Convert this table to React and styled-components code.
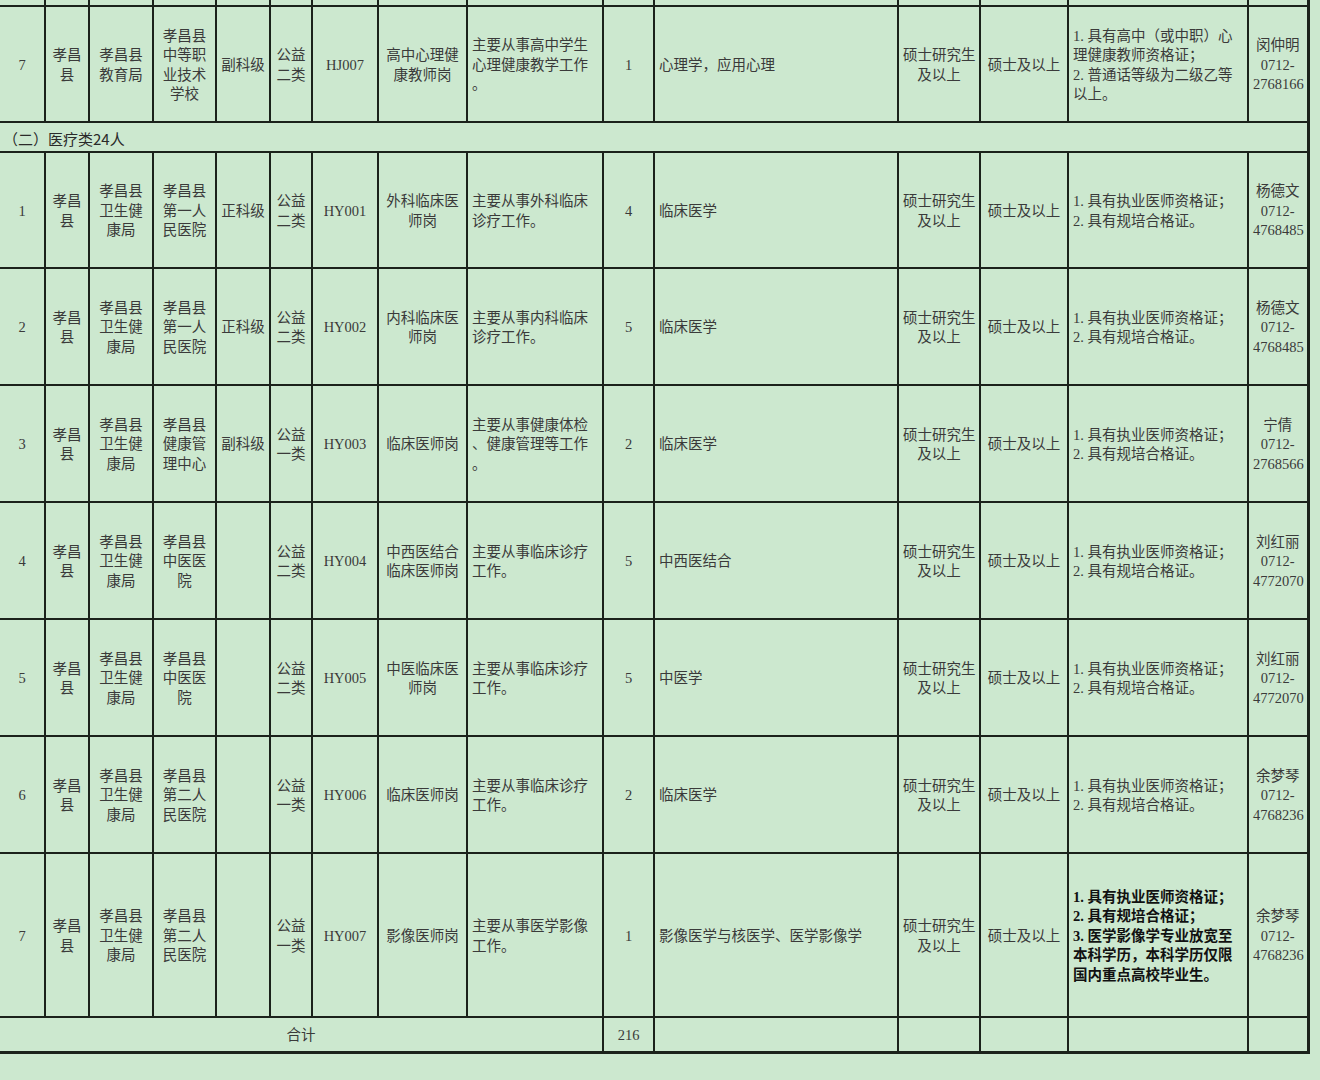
import React from 'react';
import styled, { createGlobalStyle } from 'styled-components';

const GlobalStyle = createGlobalStyle`
  html, body {
    margin: 0;
    padding: 0;
    background: #cce8cf;
  }
`;

// column widths measured between grid lines
const widths = [45, 44, 64, 63, 54, 42, 66, 89, 136, 51, 244, 82, 88, 180, 60];
const leftCols = [8, 10, 13];

const county = ['孝昌', '县'];
const health = ['孝昌县', '卫生健', '康局'];
const edu = ['硕士研究生', '及以上'];
const degree = '硕士及以上';
const req = ['1. 具有执业医师资格证；', '2. 具有规培合格证。'];

const rows = [
  {
    h: 116,
    cells: ['7', county, ['孝昌县', '教育局'], ['孝昌县', '中等职', '业技术', '学校'], '副科级', ['公益', '二类'], 'HJ007',
      ['高中心理健', '康教师岗'], ['主要从事高中学生', '心理健康教学工作', '。'], '1', '心理学，应用心理', edu, degree,
      ['1. 具有高中（或中职）心', '理健康教师资格证；', '2. 普通话等级为二级乙等', '以上。'], ['闵仲明', '0712-', '2768166']],
  },
  { section: '（二）医疗类24人' },
  {
    h: 116,
    cells: ['1', county, health, ['孝昌县', '第一人', '民医院'], '正科级', ['公益', '二类'], 'HY001',
      ['外科临床医', '师岗'], ['主要从事外科临床', '诊疗工作。'], '4', '临床医学', edu, degree, req, ['杨德文', '0712-', '4768485']],
  },
  {
    h: 117,
    cells: ['2', county, health, ['孝昌县', '第一人', '民医院'], '正科级', ['公益', '二类'], 'HY002',
      ['内科临床医', '师岗'], ['主要从事内科临床', '诊疗工作。'], '5', '临床医学', edu, degree, req, ['杨德文', '0712-', '4768485']],
  },
  {
    h: 117,
    cells: ['3', county, health, ['孝昌县', '健康管', '理中心'], '副科级', ['公益', '一类'], 'HY003',
      '临床医师岗', ['主要从事健康体检', '、健康管理等工作', '。'], '2', '临床医学', edu, degree, req, ['宁倩', '0712-', '2768566']],
  },
  {
    h: 117,
    cells: ['4', county, health, ['孝昌县', '中医医', '院'], '', ['公益', '二类'], 'HY004',
      ['中西医结合', '临床医师岗'], ['主要从事临床诊疗', '工作。'], '5', '中西医结合', edu, degree, req, ['刘红丽', '0712-', '4772070']],
  },
  {
    h: 117,
    cells: ['5', county, health, ['孝昌县', '中医医', '院'], '', ['公益', '二类'], 'HY005',
      ['中医临床医', '师岗'], ['主要从事临床诊疗', '工作。'], '5', '中医学', edu, degree, req, ['刘红丽', '0712-', '4772070']],
  },
  {
    h: 117,
    cells: ['6', county, health, ['孝昌县', '第二人', '民医院'], '', ['公益', '一类'], 'HY006',
      '临床医师岗', ['主要从事临床诊疗', '工作。'], '2', '临床医学', edu, degree, req, ['余梦琴', '0712-', '4768236']],
  },
  {
    h: 164,
    bold: 13,
    cells: ['7', county, health, ['孝昌县', '第二人', '民医院'], '', ['公益', '一类'], 'HY007',
      '影像医师岗', ['主要从事医学影像', '工作。'], '1', '影像医学与核医学、医学影像学', edu, degree,
      ['1. 具有执业医师资格证；', '2. 具有规培合格证；', '3. 医学影像学专业放宽至', '本科学历，本科学历仅限', '国内重点高校毕业生。'],
      ['余梦琴', '0712-', '4768236']],
  },
];

function Lines({ value }) {
  if (!Array.isArray(value)) return value;
  return value.map((t, i) => (
    <React.Fragment key={i}>
      {i > 0 && <br />}
      {t}
    </React.Fragment>
  ));
}

export default function App() {
  return (
    <Page>
      <GlobalStyle />
      <Sheet>
        <colgroup>
          {widths.map((w, i) => <col key={i} style={{ width: w }} />)}
        </colgroup>
        <tbody>
          <Row $h={6}>
            {widths.map((w, i) => <Cell key={i} />)}
          </Row>
          {rows.map((r, ri) =>
            r.section ? (
              <Row key={ri} $h={30}>
                <SectionCell colSpan={15}>{r.section}</SectionCell>
              </Row>
            ) : (
              <Row key={ri} $h={r.h}>
                {r.cells.map((c, ci) => (
                  <Cell key={ci} $left={leftCols.includes(ci)} $bold={r.bold === ci}>
                    <Lines value={c} />
                  </Cell>
                ))}
              </Row>
            )
          )}
          <Row $h={35}>
            <Cell colSpan={9}>合计</Cell>
            <Cell>216</Cell>
            <Cell />
            <Cell />
            <Cell />
            <Cell />
            <Cell />
          </Row>
        </tbody>
      </Sheet>
    </Page>
  );
}

const Page = styled.div`
  width: 1320px;
  height: 1080px;
  overflow: hidden;
  background: #cce8cf;
  font-family: "Liberation Serif", "Noto Sans CJK SC", serif;
`;

const Sheet = styled.table`
  border-collapse: collapse;
  table-layout: fixed;
  width: 1308px;
  border-right: 3px solid #1b221b;
  border-bottom: 3px solid #1b221b;

  tr:first-child td {
    border-top: none;
    padding: 0;
  }
`;

const Row = styled.tr`
  height: ${props => props.$h}px;
`;

const Cell = styled.td`
  border: 2px solid #1b221b;
  padding: 3px 4px 0;
  text-align: ${props => props.$left ? 'left' : 'center'};
  vertical-align: middle;
  font-size: 14.5px;
  line-height: 19.5px;
  font-weight: ${props => props.$bold ? 700 : 400};
  color: ${props => props.$bold ? '#111' : '#3a3a3a'};
  white-space: nowrap;
  overflow: hidden;

  &:first-child {
    border-left: none;
  }
`;

const SectionCell = styled.td`
  border: 2px solid #1b221b;
  border-left: none;
  padding: 2px 3px 0;
  text-align: left;
  vertical-align: middle;
  font-family: "Noto Sans CJK SC", sans-serif;
  font-size: 15px;
  color: #2a2a2a;
`;
